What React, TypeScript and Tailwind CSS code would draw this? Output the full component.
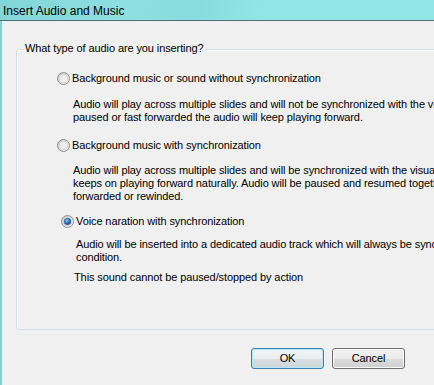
import React from "react";

function Radio({ checked }: { checked?: boolean }) {
  return (
    <svg width="13" height="13" viewBox="0 0 13 13" className="shrink-0">
      <defs>
        <linearGradient id="rfill" x1="0" y1="0" x2="1" y2="1">
          <stop offset="0" stopColor="#c9c9c9" />
          <stop offset="1" stopColor="#ffffff" />
        </linearGradient>
        <linearGradient id="rinner" x1="0" y1="0" x2="1" y2="1">
          <stop offset="0" stopColor="#e6e6e6" />
          <stop offset="1" stopColor="#f7f7f7" />
        </linearGradient>
        <radialGradient id="rdot" cx="0.4" cy="0.35" r="0.7">
          <stop offset="0" stopColor="#8fd0ff" />
          <stop offset="0.5" stopColor="#2f78c4" />
          <stop offset="1" stopColor="#123e78" />
        </radialGradient>
      </defs>
      <circle cx="6.5" cy="6.5" r="6" fill="url(#rfill)" stroke="#8f8f8f" strokeWidth="1" />
      <circle cx="6.5" cy="6.5" r="4.4" fill="url(#rinner)" stroke="#bdbdbd" strokeWidth="0.6" />
      {checked && <circle cx="6.5" cy="6.5" r="3.3" fill="url(#rdot)" stroke="#1c4a80" strokeWidth="0.5" />}
    </svg>
  );
}

export default function App() {
  return (
    <div className="w-[434px] h-[385px] overflow-hidden bg-[#f0f0f0] flex flex-col font-['Liberation_Sans',Arial,sans-serif] text-black">
      <div className="h-[20px] shrink-0 bg-[linear-gradient(100deg,#83d6d8_0%,#8ddfe0_30%,#88dbdc_45%,#92e5e5_60%,#92e6e6_100%)] text-[12px] leading-[20px] pl-[3px] pt-px whitespace-nowrap">
        Insert Audio and Music
      </div>
      <div className="h-px shrink-0 bg-[#4f6d73]" />
      <div className="flex-1 flex min-h-0">
        <div className="w-[2px] shrink-0 bg-[#7fd3d7]" />
        <div className="flex-1 flex flex-col min-w-0 pl-[14px] pt-[28px] text-[11px] leading-[13px] tracking-[-0.1px]">
          <div className="relative h-[281px] w-[440px] shrink-0 rounded-[3px] border border-[#d5dfe5] shadow-[inset_1px_1px_0_#ffffff]">
            <div className="absolute -top-[8px] left-[7px] bg-[#f0f0f0] px-[1px] whitespace-nowrap">
              What type of audio are you inserting?
            </div>
            <div className="flex flex-col whitespace-nowrap">
              <div className="mt-[22px] ml-[40px] flex items-center gap-[2px] h-[13px]">
                <Radio />
                <span>Background music or sound without synchronization</span>
              </div>
              <div className="mt-[13px] ml-[56px]">
                <div>Audio will play across multiple slides and will not be synchronized with the visual presentation.</div>
                <div>paused or fast forwarded the audio will keep playing forward.</div>
              </div>
              <div className="mt-[15px] ml-[40px] flex items-center gap-[2px] h-[13px]">
                <Radio />
                <span>Background music with synchronization</span>
              </div>
              <div className="mt-[12px] ml-[56px]">
                <div>Audio will play across multiple slides and will be synchronized with the visual presentation.</div>
                <div>keeps on playing forward naturally. Audio will be paused and resumed together with slides.</div>
                <div>forwarded or rewinded.</div>
              </div>
              <div className="mt-[12px] ml-[44px] flex items-center gap-[2px] h-[13px]">
                <Radio checked />
                <span>Voice naration with synchronization</span>
              </div>
              <div className="mt-[10px] ml-[59px]">
                <div>Audio will be inserted into a dedicated audio track which will always be synchronized in any</div>
                <div>condition.</div>
              </div>
              <div className="mt-[7px] ml-[57px]">This sound cannot be paused/stopped by action</div>
            </div>
          </div>
          <div className="mt-[18px] flex justify-end gap-[8px] pr-[29px]">
            <button className="w-[73px] h-[21px] rounded-[3px] border border-[#3c7fb1] shadow-[inset_0_0_0_1px_#b5e6f7] bg-[linear-gradient(to_bottom,#f2f5f7_0%,#eaeef0_50%,#dae0e3_50%,#cdd5d9_100%)] text-[11px] leading-[13px]">
              OK
            </button>
            <button className="w-[73px] h-[21px] rounded-[3px] border border-[#707070] shadow-[inset_0_0_0_1px_#fbfbfb] bg-[linear-gradient(to_bottom,#f2f2f2_0%,#ebebeb_50%,#dddddd_50%,#cfcfcf_100%)] text-[11px] leading-[13px]">
              Cancel
            </button>
          </div>
        </div>
      </div>
    </div>
  );
}
